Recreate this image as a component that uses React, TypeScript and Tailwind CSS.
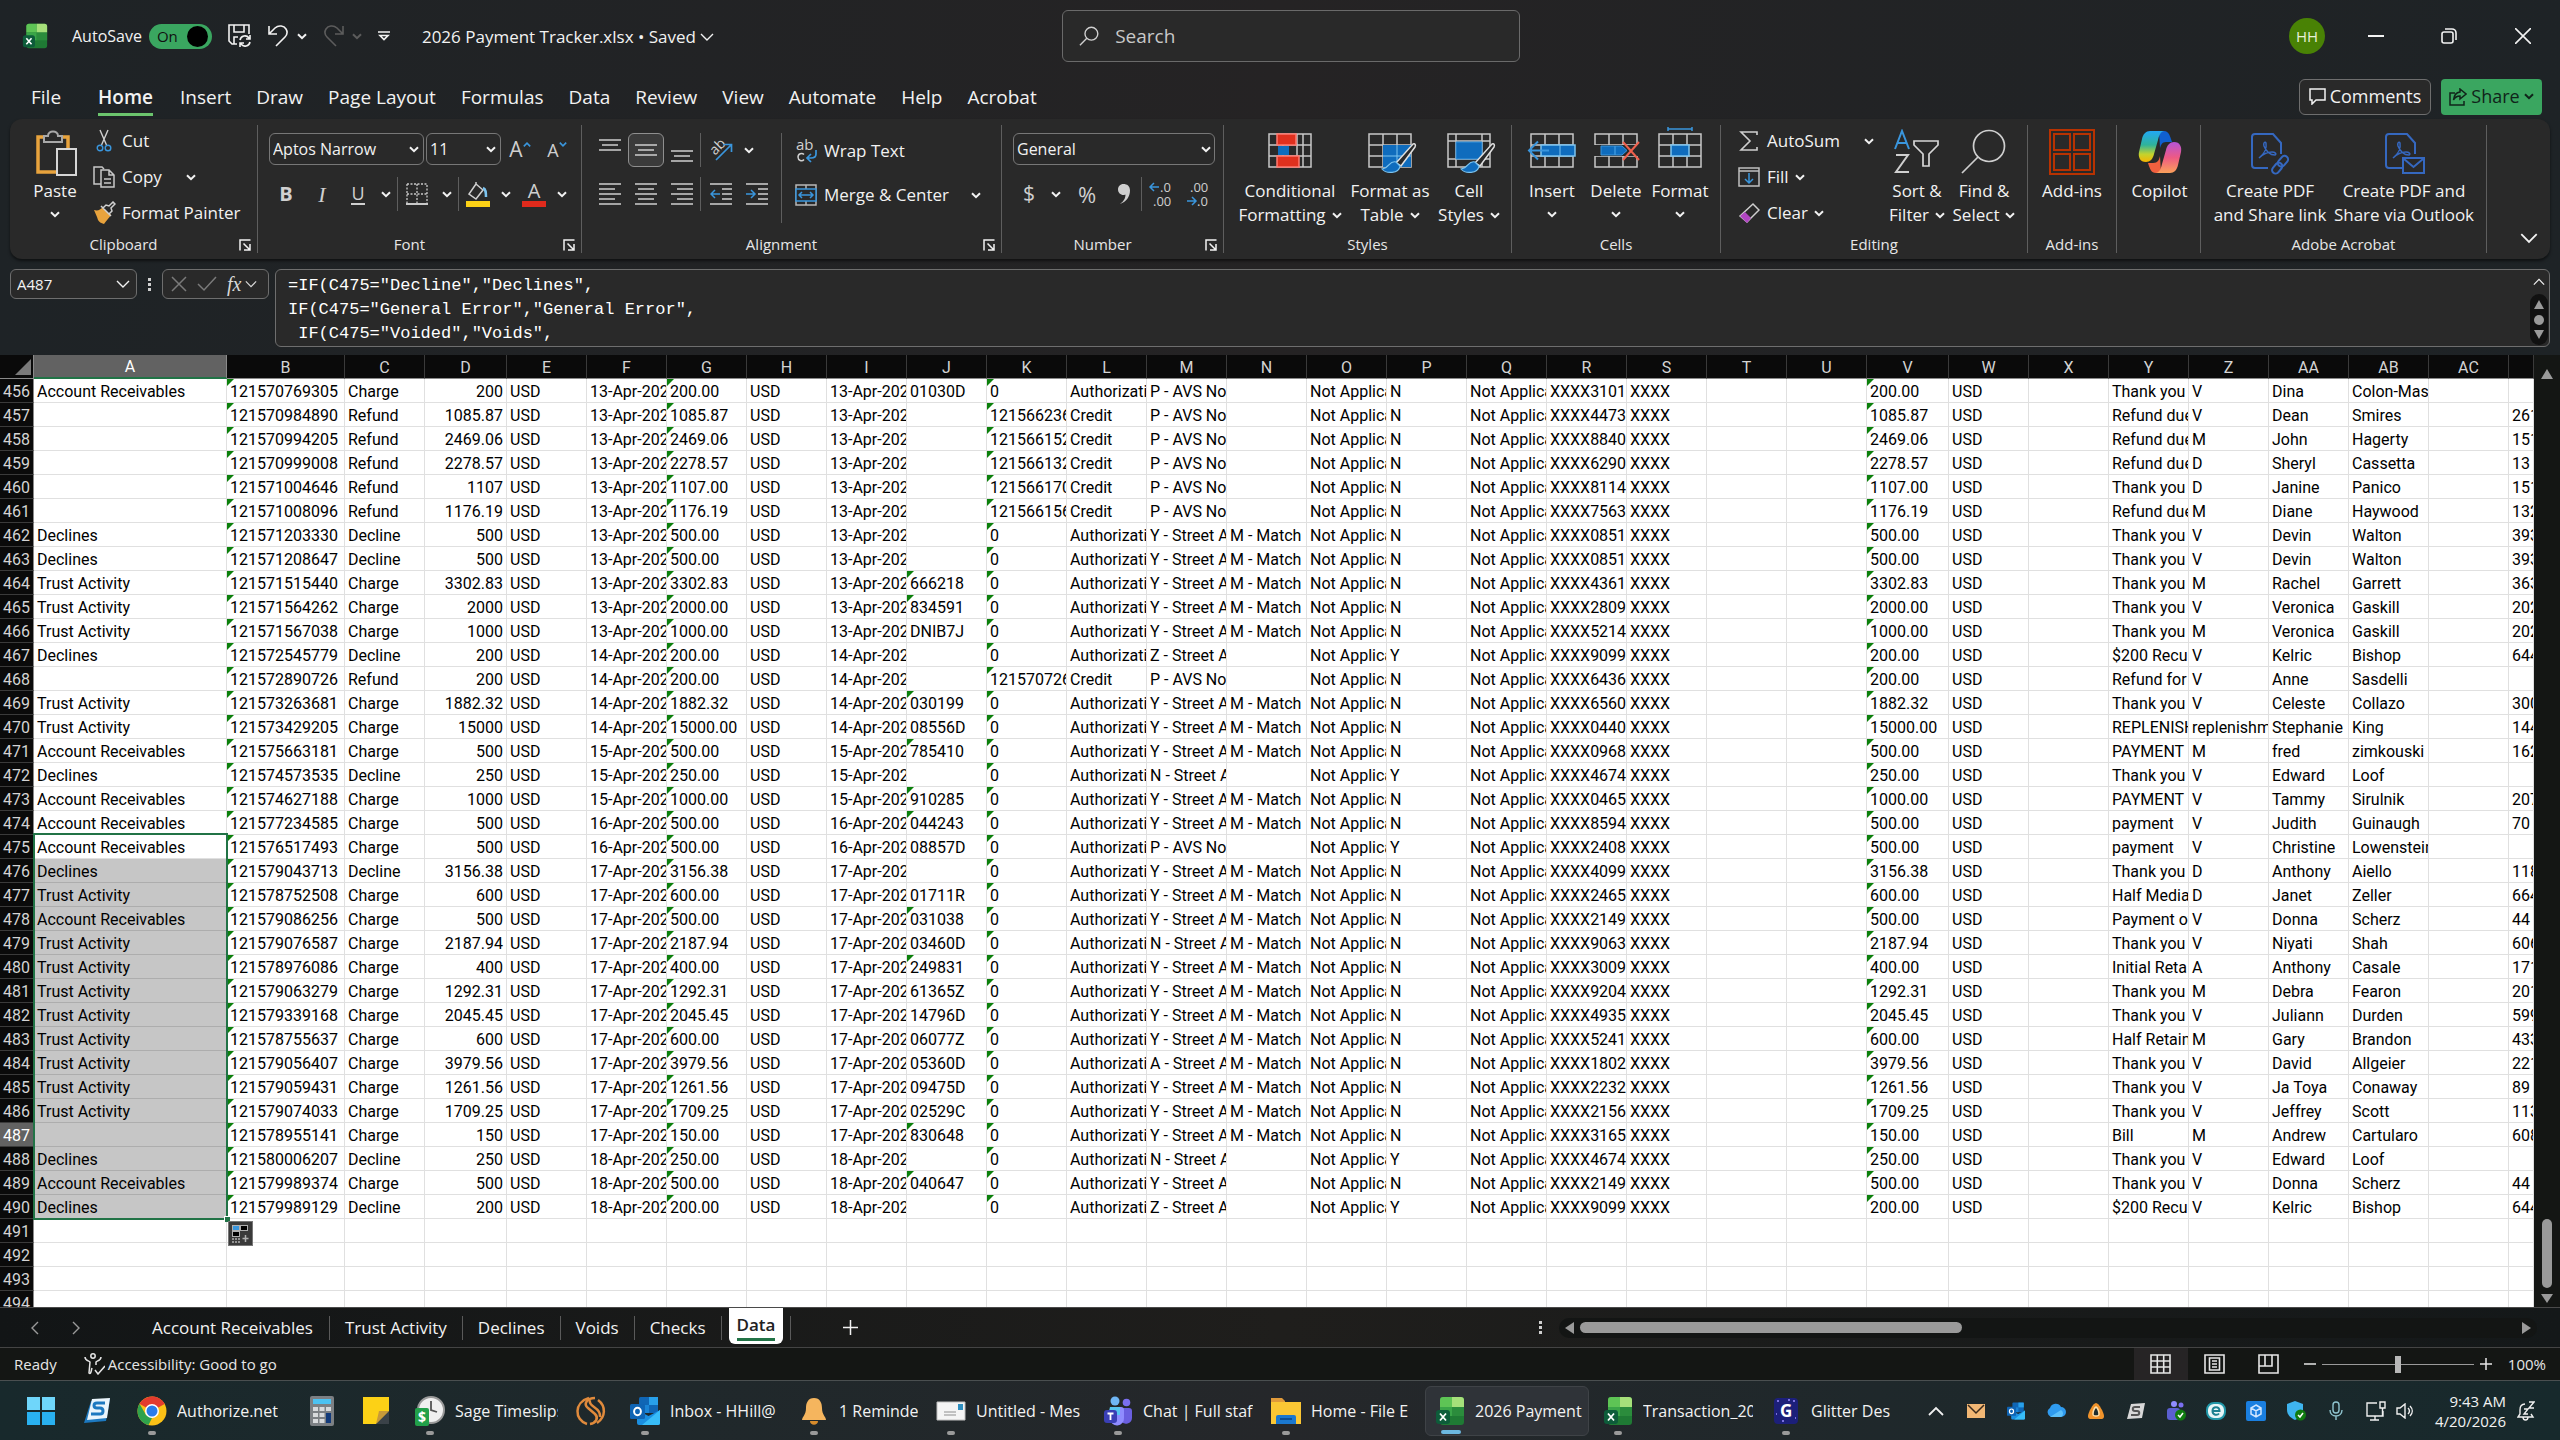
import { useState, type ReactNode } from "react";
import clsx from "clsx";

type Row = [
    account: string,
    id: string,
    type: string,
    amount: number,
    day: number,
    auth: string,
    ref: string,
    avs: string,
    cvv: string,
    dup: string,
    card: string,
    note: string,
    brand: string,
    first: string,
    last: string,
    address: string,
];

const FIRST_ROW = 456;
const AR = "Account Receivables";
const TA = "Trust Activity";
const DE = "Declines";
const TY = "Thank you f";
const RD = "Refund due";
const YS = "Y - Street A";
const PA = "P - AVS No";
const MM = "M - Match";

// long values are kept at the length their column can show
const ROWS: Row[] = [
    [AR, "121570769305", "Charge", 200, 13, "01030D", "0", PA, "", "N", "3101", TY, "V", "Dina", "Colon-Mas", ""],
    ["", "121570984890", "Refund", 1085.87, 13, "", "121566236", PA, "", "N", "4473", RD, "V", "Dean", "Smires", "261"],
    ["", "121570994205", "Refund", 2469.06, 13, "", "121566152", PA, "", "N", "8840", RD, "M", "John", "Hagerty", "151"],
    ["", "121570999008", "Refund", 2278.57, 13, "", "121566132", PA, "", "N", "6290", RD, "D", "Sheryl", "Cassetta", "13 T"],
    ["", "121571004646", "Refund", 1107, 13, "", "121566170", PA, "", "N", "8114", TY, "D", "Janine", "Panico", "151"],
    ["", "121571008096", "Refund", 1176.19, 13, "", "121566156", PA, "", "N", "7563", RD, "M", "Diane", "Haywood", "132"],
    [DE, "121571203330", "Decline", 500, 13, "", "0", YS, MM, "N", "0851", TY, "V", "Devin", "Walton", "393"],
    [DE, "121571208647", "Decline", 500, 13, "", "0", YS, MM, "N", "0851", TY, "V", "Devin", "Walton", "393"],
    [TA, "121571515440", "Charge", 3302.83, 13, "666218", "0", YS, MM, "N", "4361", TY, "M", "Rachel", "Garrett", "363"],
    [TA, "121571564262", "Charge", 2000, 13, "834591", "0", YS, MM, "N", "2809", TY, "V", "Veronica", "Gaskill", "202"],
    [TA, "121571567038", "Charge", 1000, 13, "DNIB7J", "0", YS, MM, "N", "5214", TY, "M", "Veronica", "Gaskill", "202"],
    [DE, "121572545779", "Decline", 200, 14, "", "0", "Z - Street A", "", "Y", "9099", "$200 Recu", "V", "Kelric", "Bishop", "644"],
    ["", "121572890726", "Refund", 200, 14, "", "121570726", PA, "", "N", "6436", "Refund for", "V", "Anne", "Sasdelli", ""],
    [TA, "121573263681", "Charge", 1882.32, 14, "030199", "0", YS, MM, "N", "6560", TY, "V", "Celeste", "Collazo", "300"],
    [TA, "121573429205", "Charge", 15000, 14, "08556D", "0", YS, MM, "N", "0440", "REPLENISH", "replenishm", "Stephanie", "King", "144"],
    [AR, "121575663181", "Charge", 500, 15, "785410", "0", YS, MM, "N", "0968", "PAYMENT", "M", "fred", "zimkouski", "162"],
    [DE, "121574573535", "Decline", 250, 15, "", "0", "N - Street A", "", "Y", "4674", TY, "V", "Edward", "Loof", ""],
    [AR, "121574627188", "Charge", 1000, 15, "910285", "0", YS, MM, "N", "0465", "PAYMENT", "V", "Tammy", "Sirulnik", "207"],
    [AR, "121577234585", "Charge", 500, 16, "044243", "0", YS, MM, "N", "8594", "payment", "V", "Judith", "Guinaugh", "70 J"],
    [AR, "121576517493", "Charge", 500, 16, "08857D", "0", PA, "", "Y", "2408", "payment", "V", "Christine", "Lowenstein", ""],
    [DE, "121579043713", "Decline", 3156.38, 17, "", "0", YS, MM, "N", "4099", TY, "D", "Anthony", "Aiello", "118"],
    [TA, "121578752508", "Charge", 600, 17, "01711R", "0", YS, MM, "N", "2465", "Half Media", "D", "Janet", "Zeller", "664"],
    [AR, "121579086256", "Charge", 500, 17, "031038", "0", YS, MM, "N", "2149", "Payment of", "V", "Donna", "Scherz", "44"],
    [TA, "121579076587", "Charge", 2187.94, 17, "03460D", "0", "N - Street A", MM, "N", "9063", TY, "V", "Niyati", "Shah", "606"],
    [TA, "121578976086", "Charge", 400, 17, "249831", "0", YS, MM, "N", "3009", "Initial Reta", "A", "Anthony", "Casale", "171"],
    [TA, "121579063279", "Charge", 1292.31, 17, "61365Z", "0", YS, MM, "N", "9204", TY, "M", "Debra", "Fearon", "201"],
    [TA, "121579339168", "Charge", 2045.45, 17, "14796D", "0", YS, MM, "N", "4935", TY, "V", "Juliann", "Durden", "599"],
    [TA, "121578755637", "Charge", 600, 17, "06077Z", "0", YS, MM, "N", "5241", "Half Retain", "M", "Gary", "Brandon", "433"],
    [TA, "121579056407", "Charge", 3979.56, 17, "05360D", "0", "A - Street A", MM, "N", "1802", TY, "V", "David", "Allgeier", "221"],
    [TA, "121579059431", "Charge", 1261.56, 17, "09475D", "0", YS, MM, "N", "2232", TY, "V", "Ja Toya", "Conaway", "89"],
    [TA, "121579074033", "Charge", 1709.25, 17, "02529C", "0", YS, MM, "N", "2156", TY, "V", "Jeffrey", "Scott", "113"],
    ["", "121578955141", "Charge", 150, 17, "830648", "0", YS, MM, "N", "3165", "Bill", "M", "Andrew", "Cartularo", "608"],
    [DE, "121580006207", "Decline", 250, 18, "", "0", "N - Street A", "", "Y", "4674", TY, "V", "Edward", "Loof", ""],
    [AR, "121579989374", "Charge", 500, 18, "040647", "0", YS, "", "N", "2149", TY, "V", "Donna", "Scherz", "44"],
    [DE, "121579989129", "Decline", 200, 18, "", "0", "Z - Street A", "", "Y", "9099", "$200 Recu", "V", "Kelric", "Bishop", "644"],
];

const COLUMNS = "A B C D E F G H I J K L M N O P Q R S T U V W X Y Z AA AB AC".split(" ");

// one string per column, A to AD
function toCells(r: Row): string[] {
    const [account, id, type, amount, day, auth, ref, avs, cvv, dup, card, note, brand, first, last, address] = r;
    const date = `${day}-Apr-202`;
    const fixed = amount.toFixed(2);
    return [
        account, id, type, String(amount), "USD", date, fixed, "USD", date, auth, ref,
        type === "Refund" ? "Credit" : "Authorizati",
        avs, cvv, "Not Applica", dup, "Not Applica", `XXXX${card}`, "XXXX", "", "",
        fixed, "USD", "", note, brand, first, last, "", address,
    ];
}

// "number stored as text" flag
const isFlagged = (col: string, value: string) =>
    ["B", "G", "K", "V"].includes(col) || (col === "J" && /^\d+$/.test(value));

/* ---------- small icons ---------- */

function Chevron({ className = "" }: { className?: string }) {
    return (
        <svg width="10" height="7" viewBox="0 0 10 7" className={clsx("shrink-0", className)} fill="none" stroke="currentColor" strokeWidth="2">
            <path d="M1 1.200l4 4 4-4" />
        </svg>
    );
}

function ThinChevron({ size = 14, className = "" }: { size?: number; className?: string }) {
    return (
        <svg width={size} height={size} viewBox="0 0 14 14" className={clsx("shrink-0", className)} fill="none" stroke="currentColor" strokeWidth="1.400">
            <path d="M1 4l6 6 6-6" />
        </svg>
    );
}

function Lines({ rows, width = 22, height = 22 }: { rows: [number, number, number][]; width?: number; height?: number }) {
    return (
        <svg width={width} height={height} viewBox={`0 0 ${width} ${height}`} stroke="#cfcfcf" strokeWidth="1.500">
            {rows.map(([x, y, w]) => (
                <path key={y} d={`M${x} ${y}h${w}`} />
            ))}
        </svg>
    );
}

function Launcher() {
    return (
        <button aria-label="Dialog launcher" className="mr-1 flex size-4 items-center justify-center">
            <svg width="12" height="12" viewBox="0 0 12 12" fill="none" stroke="#f2f2f2" strokeWidth="1.500">
                <path d="M1 11.500V1h10.500M4.500 4.500l6 6M11 5v6H5" />
            </svg>
        </button>
    );
}

function ExcelIcon({ size = 30 }: { size?: number }) {
    return (
        <svg width={size} height={size} viewBox="0 0 30 30">
            <rect x="5" y="1" width="24" height="28" rx="3" fill="#1f7a34" />
            <path d="M5 4a3 3 0 0 1 3-3h9v10H5z" fill="#5ec455" />
            <path d="M17 1h9a3 3 0 0 1 3 3v7H17z" fill="#a6e07a" />
            <path d="M5 11h12v9H5z" fill="#3aa548" />
            <path d="M17 11h12v9H17z" fill="#2b8c3c" />
            <rect x="1" y="14" width="14" height="14" rx="3" fill="#0d5c3a" />
            <path d="M5 17.500l6 7M11 17.500l-6 7" stroke="#fff" strokeWidth="1.800" />
        </svg>
    );
}

function OutlookIcon({ size = 30 }: { size?: number }) {
    return (
        <svg width={size} height={size} viewBox="0 0 30 30">
            <rect x="9" y="1" width="19" height="16" rx="1.500" fill="#1066b5" />
            <path d="M9 9h10v8H9z" fill="#1a84d6" />
            <path d="M19 1h9v8h-9z" fill="#28a0ea" />
            <path d="M7 14l11.500 6L30 14v13a2 2 0 0 1-2 2H9a2 2 0 0 1-2-2z" fill="#1b8fe0" />
            <path d="M30 14v13a2 2 0 0 1-2 2H12z" fill="#38bdf8" />
            <rect x="0" y="8" width="15" height="15" rx="1.500" fill="#0f64b4" />
            <ellipse cx="7.500" cy="15.500" rx="3.400" ry="3.800" fill="none" stroke="#fff" strokeWidth="2" />
        </svg>
    );
}

function TeamsIcon({ size = 30 }: { size?: number }) {
    return (
        <svg width={size} height={size} viewBox="0 0 30 30">
            <circle cx="12" cy="5" r="4.500" fill="#6fb6f5" />
            <circle cx="23.500" cy="6.500" r="3.800" fill="#7b6ff0" />
            <path d="M18 12h8a3 3 0 0 1 3 3v7a6 6 0 0 1-11 3z" fill="#6a5fe0" />
            <path d="M7 11h11a3 3 0 0 1 3 3v8a7 7 0 0 1-14 1z" fill="#8f8cff" />
            <path d="M7 11h10v8H5z" fill="#56c4f0" />
            <rect x="1" y="14" width="13" height="13" rx="3" fill="#3a3fb5" />
            <path d="M4.500 17.500h6M7.500 17.500v6.500" stroke="#fff" strokeWidth="1.800" />
        </svg>
    );
}

/* ---------- ribbon ---------- */

function Group({ label, width, launcher, children }: { label?: string; width: string; launcher?: boolean; children: ReactNode }) {
    return (
        <section className={clsx("flex shrink-0", width)} aria-label={label}>
            <div className="flex min-w-0 flex-1 flex-col pt-1">
                <div className="flex h-[108px]">{children}</div>
                <div className="flex h-[27px] items-center text-[15px] text-[#e6e6e6]">
                    <span className="flex-1 text-center">{label}</span>
                    {launcher && <Launcher />}
                </div>
            </div>
            <div className="my-1.5 w-px bg-[#5e5e5e]" />
        </section>
    );
}

function BigButton({ width, icon, lines, menu }: { width: string; icon: ReactNode; lines: string[]; menu?: "inline" | "below" }) {
    return (
        <button className={clsx("flex shrink-0 flex-col items-center whitespace-nowrap pt-1.5 text-[17px] leading-6", width)}>
            <span className="flex h-[50px] items-start justify-center">{icon}</span>
            {lines.map((line, i) => (
                <span key={line} className="flex items-center gap-1.5">
                    {line}
                    {menu === "inline" && i === lines.length - 1 && <Chevron />}
                </span>
            ))}
            {menu === "below" && <Chevron className="mt-2" />}
        </button>
    );
}

function SmallButton({ icon, label, menu }: { icon: ReactNode; label: string; menu?: boolean }) {
    return (
        <button className="flex h-9 items-center gap-1.5 whitespace-nowrap text-[17px]">
            <span className="flex w-6 justify-center">{icon}</span>
            <span>{label}</span>
            {menu && <Chevron />}
        </button>
    );
}

function Tool({ width = "w-9", label, active, children }: { width?: string; label: string; active?: boolean; children: ReactNode }) {
    return (
        <button
            aria-label={label}
            className={clsx(
                "flex h-[34px] shrink-0 items-center justify-center",
                width,
                active && "rounded-md border border-[#8f8f8f] bg-[#3b3b3b]",
            )}
        >
            {children}
        </button>
    );
}

const Rule = () => <div className="h-[34px] w-px shrink-0 bg-[#5e5e5e]" />;

function Brush() {
    return (
        <g>
            <path d="M48 15c2-1 3 1 2 3L36 37l-5-3z" fill="#292929" stroke="#e0e0e0" strokeWidth="1.500" />
            <path d="M31 33c-7-2-6 6-14 7 4 5 17 5 18-3z" fill="#0f6cbd" stroke="#7cc4f0" strokeWidth="1.200" />
        </g>
    );
}

function CellGrid({ children }: { children?: ReactNode }) {
    return (
        <svg width="50" height="46" viewBox="0 0 50 46" fill="none" className="overflow-visible">
            <path d="M4 5h42v33H4zM4 16h42M4 27h42M18 5v33M32 5v33" stroke="#c8c8c8" strokeWidth="1.500" />
            {children}
        </svg>
    );
}

function PdfIcon({ children }: { children: ReactNode }) {
    return (
        <svg width="42" height="46" viewBox="0 0 42 46" fill="none" stroke="#3568c0" strokeWidth="2">
            <path d="M19 39H6a3 3 0 0 1-3-3V8a3 3 0 0 1 3-3h18l8 9v11" />
            <path d="M10 29c5-4 8-10 7-15-1-2-3 0-2 3 2 5 6 9 11 9 2-1 0-3-3-3-5 0-9 2-13 6z" strokeWidth="1.500" />
            {children}
        </svg>
    );
}

function Ribbon() {
    return (
        <div className="mx-2.5 flex h-[140px] rounded-xl bg-[#292929] text-[#f2f2f2] shadow-[0_2px_3px_#0008]">
            <Group label="Clipboard" width="w-[248px]" launcher>
                <BigButton
                    width="ml-[18px] w-[54px]"
                    menu="below"
                    lines={["Paste"]}
                    icon={
                        <svg width="46" height="48" viewBox="0 0 46 48" fill="none">
                            <path d="M6 8h30v35H6z" stroke="#e8a33d" strokeWidth="3.500" />
                            <path d="M12 13V7h4c0-6 10-6 10 0h4v6z" fill="#292929" stroke="#a8a8a8" strokeWidth="2" />
                            <path d="M25 20h19v26H25z" fill="#292929" stroke="#d6d6d6" strokeWidth="2" />
                        </svg>
                    }
                />
                <div className="ml-2.5 flex flex-col">
                    <SmallButton
                        label="Cut"
                        icon={
                            <svg width="16" height="24" viewBox="0 0 16 24" fill="none" strokeWidth="1.400">
                                <path d="M4 1l6.500 15M12 1L5.500 16" stroke="#d0d0d0" />
                                <circle cx="4" cy="19" r="2.800" stroke="#3a96dd" />
                                <circle cx="12" cy="19" r="2.800" stroke="#3a96dd" />
                            </svg>
                        }
                    />
                    <div className="flex items-center">
                        <SmallButton
                            label="Copy"
                            icon={
                                <svg width="24" height="24" viewBox="0 0 24 24" fill="none" stroke="#c8c8c8" strokeWidth="1.500">
                                    <path d="M9 19H2V2h8l2 2" />
                                    <path d="M9 5h8l5 5v12H9zM17 5v5h5M12 14h7M12 18h7" />
                                </svg>
                            }
                        />
                        <Chevron className="ml-6" />
                    </div>
                    <SmallButton
                        label="Format Painter"
                        icon={
                            <svg width="24" height="24" viewBox="0 0 24 24" fill="none">
                                <path d="M2 9c4 1 6 0 9-3l8 8c-2 3-5 6-7 9-3-1-5-2-6-4l-1-3z" fill="#e8a33d" />
                                <path d="M9 5l10 10M11 7l3-3 3 1 4-4 2 2-4 4 1 3-3 3z" fill="#292929" stroke="#d0d0d0" strokeWidth="1.500" />
                            </svg>
                        }
                    />
                </div>
            </Group>

            <Group label="Font" width="w-[324px]" launcher>
                <div className="flex flex-col gap-2.5 pt-2.5 pl-[11px]">
                    <div className="flex h-[34px]">
                        <label className="flex h-8 w-[155px] items-center rounded-md border border-[#777] pr-1 pl-[3px]">
                            <input aria-label="Font name" defaultValue="Aptos Narrow" className="w-full min-w-0 bg-transparent text-[16px] outline-none" />
                            <Chevron />
                        </label>
                        <label className="ml-0.5 flex h-8 w-[75px] items-center rounded-md border border-[#777] pr-1 pl-[3px]">
                            <input aria-label="Font size" defaultValue="11" className="w-full min-w-0 bg-transparent text-[16px] outline-none" />
                            <Chevron />
                        </label>
                        <Tool label="Increase font size" width="w-[38px]">
                            <span className="text-[21px] text-[#cfcfcf]">A</span>
                            <span className="mb-3 text-[#3a96dd]"><Chevron className="w-2 rotate-180" /></span>
                        </Tool>
                        <Tool label="Decrease font size">
                            <span className="text-[18px] text-[#cfcfcf]">A</span>
                            <span className="mb-3 text-[#3a96dd]"><Chevron className="w-2" /></span>
                        </Tool>
                    </div>
                    <div className="flex h-[34px]">
                        <Tool label="Bold" width="w-[34px]"><b className="text-[20px] text-[#d0d0d0]">B</b></Tool>
                        <Tool label="Italic" width="w-[38px]"><i className="font-['Liberation_Serif',serif] text-[22px] text-[#d0d0d0]">I</i></Tool>
                        <Tool label="Underline" width="w-[34px]"><span className="border-b-2 border-[#d0d0d0] text-[18px] leading-5 text-[#d0d0d0]">U</span></Tool>
                        <Tool label="Underline options" width="w-[22px]"><Chevron /></Tool>
                        <Rule />
                        <Tool label="Borders" width="w-[38px]">
                            <svg width="22" height="22" viewBox="0 0 22 22" stroke="#c8c8c8" fill="none">
                                <path d="M1 1h20v19M1 1v19M11 1v19M1 11h20" strokeWidth="1.300" strokeDasharray="2 1.500" />
                                <path d="M0 21h22" strokeWidth="2" />
                            </svg>
                        </Tool>
                        <Tool label="Border options" width="w-[22px]"><Chevron /></Tool>
                        <Rule />
                        <Tool label="Fill colour" width="w-[38px]">
                            <svg width="24" height="26" viewBox="0 0 24 26" fill="none">
                                <path d="M10 3l-7 10 7 5 7-9-7-6V1" stroke="#d0d0d0" strokeWidth="1.500" />
                                <path d="M17 7c3 1 3 5 3 9" stroke="#7cc4f0" strokeWidth="2.500" />
                                <path d="M0 20h24v6H0z" fill="#fcd116" />
                            </svg>
                        </Tool>
                        <Tool label="Fill options" width="w-[18px]"><Chevron /></Tool>
                        <Tool label="Font colour" width="w-[38px]">
                            <span className="border-b-[6px] border-[#e02a1c] px-1.5 text-[20px] leading-5 text-[#d0d0d0]">A</span>
                        </Tool>
                        <Tool label="Font colour options" width="w-[18px]"><Chevron /></Tool>
                    </div>
                </div>
            </Group>

            <Group label="Alignment" width="w-[420px]" launcher>
                <div className="flex flex-col gap-2.5 pt-2.5 pl-2.5">
                    <div className="flex h-[34px]">
                        <Tool label="Top align"><Lines rows={[[0, 5, 22], [3, 10, 16], [0, 15, 22]]} height={30} /></Tool>
                        <Tool label="Middle align" active><Lines rows={[[0, 6, 22], [3, 11, 16], [0, 16, 22]]} /></Tool>
                        <Tool label="Bottom align"><Lines rows={[[0, 16, 22], [3, 21, 16], [0, 26, 22]]} height={30} /></Tool>
                        <Rule />
                        <Tool label="Orientation" width="w-10">
                            <svg width="24" height="24" viewBox="0 0 24 24" fill="none" className="overflow-visible">
                                <text x="1" y="14" fontSize="14" fill="#d0d0d0" transform="rotate(-45 8 10)">ab</text>
                                <path d="M7 22L22 7M15 6.500h7.500V14" stroke="#3a96dd" strokeWidth="1.700" />
                            </svg>
                        </Tool>
                        <Tool label="Orientation options" width="w-4"><Chevron /></Tool>
                    </div>
                    <div className="flex h-[34px]">
                        <Tool label="Align left"><Lines rows={[[0, 1, 22], [0, 6, 16], [0, 11, 22], [0, 16, 16], [0, 21, 22]]} /></Tool>
                        <Tool label="Centre"><Lines rows={[[0, 1, 22], [3, 6, 16], [0, 11, 22], [3, 16, 16], [0, 21, 22]]} /></Tool>
                        <Tool label="Align right"><Lines rows={[[0, 1, 22], [6, 6, 16], [0, 11, 22], [6, 16, 16], [0, 21, 22]]} /></Tool>
                        <Rule />
                        <Tool label="Decrease indent" width="w-10">
                            <svg width="22" height="22" viewBox="0 0 22 22" fill="none" strokeWidth="1.500">
                                <path d="M0 1h22M12 6h10M12 11h10M12 16h10M0 21h22" stroke="#cfcfcf" />
                                <path d="M10 11H1M5 7l-4 4 4 4" stroke="#3a96dd" />
                            </svg>
                        </Tool>
                        <Tool label="Increase indent" width="w-8">
                            <svg width="22" height="22" viewBox="0 0 22 22" fill="none" strokeWidth="1.500">
                                <path d="M0 1h22M12 6h10M12 11h10M12 16h10M0 21h22" stroke="#cfcfcf" />
                                <path d="M0 11h9M5 7l4 4-4 4" stroke="#3a96dd" />
                            </svg>
                        </Tool>
                    </div>
                </div>
                <div className="mt-2.5 ml-2 h-[90px] w-px bg-[#5e5e5e]" />
                <div className="ml-3 flex flex-col gap-2 pt-2.5">
                    <SmallButton
                        label="Wrap Text"
                        icon={
                            <svg width="24" height="26" viewBox="0 0 24 26" fill="none">
                                <text x="2" y="12" fontSize="15" fill="#d0d0d0">ab</text>
                                <path d="M10 16.500c-2-2-6-1-6 2.500s4 5 6 2.500" stroke="#d0d0d0" strokeWidth="1.500" />
                                <path d="M22 12v4q0 4-5 4h-3M17 16l-4 4 4 4" stroke="#3a96dd" strokeWidth="1.700" />
                            </svg>
                        }
                    />
                    <div className="flex items-center">
                        <SmallButton
                            label="Merge & Center"
                            icon={
                                <svg width="22" height="22" viewBox="0 0 22 22" fill="none">
                                    <path d="M1 1h20v20H1zM11 1v20" stroke="#b8b8b8" strokeWidth="1.500" />
                                    <path d="M1 5h20v12H1z" fill="#292929" stroke="#3a96dd" strokeWidth="1.500" />
                                    <path d="M4 11h14M7 8l-3 3 3 3M15 8l3 3-3 3" stroke="#3a96dd" strokeWidth="1.500" />
                                </svg>
                            }
                        />
                        <Chevron className="ml-[22px]" />
                    </div>
                </div>
            </Group>

            <Group label="Number" width="w-[222px]" launcher>
                <div className="flex flex-col gap-2.5 pt-2.5 pl-[11px]">
                    <div className="flex h-[34px]">
                        <label className="relative flex h-8 w-[202px] items-center">
                            <select aria-label="Number format" className="h-8 w-full appearance-none rounded-md border border-[#777] bg-transparent pl-[3px] text-[16px]">
                                <option>General</option>
                            </select>
                            <Chevron className="pointer-events-none absolute right-1" />
                        </label>
                    </div>
                    <div className="flex h-[34px]">
                        <Tool label="Accounting format" width="w-8"><span className="text-[21px] text-[#cfcfcf]">$</span></Tool>
                        <Tool label="Currency options" width="w-[22px]"><Chevron /></Tool>
                        <Tool label="Percent" width="w-10"><span className="text-[22px] text-[#cfcfcf]">%</span></Tool>
                        <Tool label="Comma style" width="w-[34px]">
                            <svg width="14" height="24" viewBox="0 0 14 24" fill="#cfcfcf">
                                <path d="M6.500 2C3 2 1 4.500 1 7.500S3.500 13 6.500 13c1 0 1.500 0 2-.4C8.500 17 6 20 3 22c6-2 10-7 10-13.500C13 4 10 2 6.500 2z" />
                            </svg>
                        </Tool>
                        <Rule />
                        <Tool label="Increase decimal" width="w-10">
                            <svg width="24" height="28" viewBox="0 0 24 28" fill="none" className="overflow-visible">
                                <text x="10" y="12" fontSize="13" fill="#cfcfcf">.0</text>
                                <text x="3" y="26" fontSize="13" fill="#cfcfcf">.00</text>
                                <path d="M9 7H0M4 3L0 7l4 4" stroke="#3a96dd" strokeWidth="1.500" />
                            </svg>
                        </Tool>
                        <Tool label="Decrease decimal" width="w-[34px]">
                            <svg width="24" height="28" viewBox="0 0 24 28" fill="none" className="overflow-visible">
                                <text x="3" y="12" fontSize="13" fill="#cfcfcf">.00</text>
                                <text x="10" y="26" fontSize="13" fill="#cfcfcf">.0</text>
                                <path d="M0 21h9M5 17l4 4-4 4" stroke="#3a96dd" strokeWidth="1.500" />
                            </svg>
                        </Tool>
                    </div>
                </div>
            </Group>

            <Group label="Styles" width="w-[288px]">
                <BigButton
                    width="ml-2 w-[116px]"
                    menu="inline"
                    lines={["Conditional", "Formatting"]}
                    icon={
                        <CellGrid>
                            <path d="M12 5h19v11H12zM12 27h22v11H12z" fill="#e0301e" stroke="#ff7a70" strokeWidth="1.500" />
                            <path d="M13 17h11v9H13z" fill="#0f6cbd" />
                            <path d="M38 5v33" stroke="#c8c8c8" strokeWidth="1.500" />
                        </CellGrid>
                    }
                />
                <BigButton
                    width="w-[84px]"
                    menu="inline"
                    lines={["Format as", "Table"]}
                    icon={
                        <CellGrid>
                            <path d="M18 16h28v22H18z" fill="#0f6cbd" />
                            <path d="M18 27h28M32 16v22" stroke="#7cc4f0" />
                            <Brush />
                        </CellGrid>
                    }
                />
                <BigButton
                    width="w-[74px]"
                    menu="inline"
                    lines={["Cell", "Styles"]}
                    icon={
                        <svg width="50" height="46" viewBox="0 0 50 46" fill="none" className="overflow-visible">
                            <path d="M4 5h42v33H4zM4 12h42M12 5v33M38 5v33M4 30h42" stroke="#c8c8c8" strokeWidth="1.500" />
                            <path d="M12 13h26v17H12z" fill="#0f6cbd" stroke="#3a96dd" />
                            <Brush />
                        </svg>
                    }
                />
            </Group>

            <Group label="Cells" width="w-[209px]">
                <BigButton
                    width="ml-2 w-16"
                    menu="below"
                    lines={["Insert"]}
                    icon={
                        <CellGrid>
                            <path d="M14 16h34v11H14z" fill="#0f6cbd" stroke="#7cc4f0" strokeWidth="1.500" />
                            <path d="M33 16v11" stroke="#7cc4f0" />
                            <path d="M22 21.500H2M11 12.500l-9 9 9 9" stroke="#3a96dd" strokeWidth="2" />
                        </CellGrid>
                    }
                />
                <BigButton
                    width="w-16"
                    menu="below"
                    lines={["Delete"]}
                    icon={
                        <CellGrid>
                            <path d="M2 16h46v11H2z" fill="#292929" />
                            <path d="M10 17h14v9H10zM24 17h7l5 4.500-5 4.500h-7z" fill="#0f6cbd" stroke="#3a96dd" />
                            <path d="M32 13l16 18M48 13L32 31" stroke="#f0604d" strokeWidth="2" />
                        </CellGrid>
                    }
                />
                <BigButton
                    width="w-16"
                    menu="below"
                    lines={["Format"]}
                    icon={
                        <CellGrid>
                            <path d="M16 16h18v11H16z" fill="#0f6cbd" stroke="#7cc4f0" strokeWidth="1.500" />
                            <path d="M13 0h24M13-2v4M37-2v4" stroke="#3a96dd" strokeWidth="1.500" />
                        </CellGrid>
                    }
                />
            </Group>

            <Group label="Editing" width="w-[307px]">
                <div className="ml-4 flex w-[150px] flex-col">
                    <div className="flex items-center">
                        <SmallButton
                            label="AutoSum"
                            icon={
                                <svg width="20" height="22" viewBox="0 0 20 22" fill="none" stroke="#cfcfcf" strokeWidth="1.600">
                                    <path d="M18 5V2H2l9 9-9 9h16v-3" />
                                </svg>
                            }
                        />
                        <Chevron className="ml-6" />
                    </div>
                    <SmallButton
                        label="Fill"
                        menu
                        icon={
                            <svg width="22" height="20" viewBox="0 0 22 20" fill="none" strokeWidth="1.500">
                                <path d="M1 1h20v18H1zM1 4h20" stroke="#c0c0c0" />
                                <path d="M11 6v10M7 12l4 4 4-4" stroke="#3a96dd" />
                            </svg>
                        }
                    />
                    <SmallButton
                        label="Clear"
                        menu
                        icon={
                            <svg width="22" height="22" viewBox="0 0 22 22" fill="none" strokeWidth="1.500">
                                <path d="M2 14L15 2l6 6L9 20z" stroke="#cfcfcf" />
                                <path d="M2 14l5-4 6 6-4 5z" fill="#b146c2" />
                            </svg>
                        }
                    />
                </div>
                <BigButton
                    width="w-[60px]"
                    menu="inline"
                    lines={["Sort &", "Filter"]}
                    icon={
                        <svg width="46" height="46" viewBox="0 0 46 46" fill="none" strokeWidth="1.700">
                            <path d="M1 20L8 2l7 18M3.500 14h9" stroke="#3a96dd" strokeWidth="2" />
                            <path d="M2 26h12L2 43h13" stroke="#cfcfcf" strokeWidth="2" />
                            <path d="M20 12h24v4l-9 9v12h-6V25l-9-9z" stroke="#d6d6d6" />
                        </svg>
                    }
                />
                <BigButton
                    width="ml-1 w-[66px]"
                    menu="inline"
                    lines={["Find &", "Select"]}
                    icon={
                        <svg width="46" height="46" viewBox="0 0 46 46" fill="none" stroke="#cfcfcf" strokeWidth="1.700">
                            <circle cx="28" cy="17" r="15.500" />
                            <path d="M17 28L1 44" />
                        </svg>
                    }
                />
            </Group>

            <Group label="Add-ins" width="w-[89px]">
                <BigButton
                    width="w-full"
                    lines={["Add-ins"]}
                    icon={
                        <svg width="46" height="46" viewBox="0 0 46 46" fill="none" stroke="#b83201" strokeWidth="2">
                            <path d="M1 1h44v44H1z" />
                            <path d="M5 5h16v16H5zM25 5h16v16H25zM5 25h16v16H5zM25 25h16v16H25z" />
                        </svg>
                    }
                />
            </Group>

            <Group width="w-[84px]">
                <BigButton
                    width="ml-px w-full"
                    lines={["Copilot"]}
                    icon={
                        <svg width="46" height="46" viewBox="0 0 46 46">
                            <defs>
                                <linearGradient id="cpA" x1="0" y1="0" x2="0" y2="1">
                                    <stop offset="0" stopColor="#22a8f5" />
                                    <stop offset=".45" stopColor="#2fb39a" />
                                    <stop offset=".75" stopColor="#c3d32e" />
                                    <stop offset="1" stopColor="#f7b500" />
                                </linearGradient>
                                <linearGradient id="cpB" x1="0" y1="0" x2="0" y2="1">
                                    <stop offset="0" stopColor="#b455d8" />
                                    <stop offset=".5" stopColor="#ee5a84" />
                                    <stop offset="1" stopColor="#fba15a" />
                                </linearGradient>
                            </defs>
                            <path d="M22 2h5c5 0 6 5 8 11h-6c-4 0-5 3-6 6z" fill="#1060d0" />
                            <path d="M13 2h14c-4 1-5 5-6 9l-4 14c-1 5-4 8-8 8-6 0-8-5-7-10l3-13c1-5 4-8 8-8z" fill="url(#cpA)" />
                            <path d="M24 44h-5c-5 0-6-4-8-10h5c5 0 6-3 7-7z" fill="#f0603f" />
                            <path d="M33 44H19c4-1 5-5 6-9l4-14c1-5 4-8 8-8 6 0 8 5 7 10l-3 13c-1 5-4 8-8 8z" fill="url(#cpB)" />
                        </svg>
                    }
                />
            </Group>

            <Group label="Adobe Acrobat" width="w-[286px]">
                <BigButton
                    width="ml-2.5 w-[118px]"
                    lines={["Create PDF", "and Share link"]}
                    icon={
                        <PdfIcon>
                            <g transform="rotate(-50 31 35)">
                                <rect x="20" y="32" width="12" height="7" rx="3.500" fill="#292929" />
                                <rect x="29" y="32" width="12" height="7" rx="3.500" />
                            </g>
                        </PdfIcon>
                    }
                />
                <BigButton
                    width="w-[150px]"
                    lines={["Create PDF and", "Share via Outlook"]}
                    icon={
                        <PdfIcon>
                            <path d="M20 29h21v15H20zM21 30l9.500 8 9.500-8" fill="#292929" />
                        </PdfIcon>
                    }
                />
            </Group>

            <div className="flex flex-1 items-end justify-end pr-3 pb-3">
                <button aria-label="Collapse the ribbon"><ThinChevron size={18} /></button>
            </div>
        </div>
    );
}

/* ---------- window chrome ---------- */

function TitleBar() {
    const [autoSave, setAutoSave] = useState(true);
    return (
        <header className="flex h-[72px] items-center pl-[22px]">
            <div className="flex flex-1 items-center">
                <ExcelIcon size={26} />
                <label className="ml-6 flex items-center gap-[7px] text-[16px]">
                    AutoSave
                    <input type="checkbox" className="sr-only" checked={autoSave} onChange={(e) => setAutoSave(e.target.checked)} />
                    <span className="flex h-[25px] w-[63px] items-center justify-between rounded-full bg-[#3aa660] pr-1 pl-2 text-[15px] text-[#111]">
                        On
                        <span className="size-[21px] rounded-full bg-black" />
                    </span>
                </label>
                <button aria-label="Save" className="ml-4">
                    <svg width="24" height="24" viewBox="0 0 24 24" fill="none" stroke="currentColor" strokeWidth="1.600">
                        <path d="M9 20H4l-3-3V1h20v9M6 1v7h10V1M6 20v-7h4" />
                        <path d="M12 16a5 5 0 0 1 9-2l1 1M22 11v4h-4M22 18a5 5 0 0 1-9 2l-1-1M12 23v-4h4" />
                    </svg>
                </button>
                <button aria-label="Undo" className="ml-4 flex items-center gap-2">
                    <svg width="21" height="22" viewBox="0 0 21 22" fill="none" stroke="currentColor" strokeWidth="1.600">
                        <path d="M1 1v8h8M1 9l6-6c4-3.500 9-2 11 1 2 3.500 1 6-1 8l-9 9" />
                    </svg>
                    <Chevron />
                </button>
                <button aria-label="Redo" className="ml-4 flex items-center gap-2 text-[#5c5c5c]">
                    <svg width="21" height="22" viewBox="0 0 21 22" fill="none" stroke="currentColor" strokeWidth="1.600">
                        <path d="M20 1v8h-8M20 9l-6-6C10-.500 5 1 3 4c-2 3.500-1 6 1 8l9 9" />
                    </svg>
                    <Chevron />
                </button>
                <button aria-label="Customise toolbar" className="ml-4">
                    <svg width="12" height="10" viewBox="0 0 12 10" fill="none" stroke="currentColor" strokeWidth="1.600">
                        <path d="M0 1h12M2 4.500h8l-4 4z" />
                    </svg>
                </button>
                <button className="ml-8 flex items-center gap-1 pt-0.5 text-[17px]">
                    2026 Payment Tracker.xlsx • Saved
                    <ThinChevron />
                </button>
            </div>
            <label className="flex h-[52px] w-[458px] items-center gap-4 rounded-md border border-[#6a6a6a] bg-[#292929] pl-4">
                <svg width="22" height="22" viewBox="0 0 22 22" fill="none" stroke="#d0d0d0" strokeWidth="1.500">
                    <circle cx="13.500" cy="8.500" r="7" />
                    <path d="M8.500 13.500L1 21" />
                </svg>
                <input type="search" placeholder="Search" className="w-full bg-transparent text-[19px] outline-none placeholder:text-[#c8c8c8]" />
            </label>
            <div className="flex flex-1 items-center justify-end">
                <button className="mr-3.5 size-9 rounded-full bg-[#498205] text-[15px] text-[#e8f0d8]">HH</button>
                <button aria-label="Minimise" className="flex w-[73px] justify-center"><svg width="16" height="2"><path d="M0 1h16" stroke="currentColor" strokeWidth="2" /></svg></button>
                <button aria-label="Restore" className="flex w-[73px] justify-center">
                    <svg width="16" height="16" viewBox="0 0 16 16" fill="none" stroke="currentColor" strokeWidth="1.600">
                        <rect x="1" y="4" width="11" height="11" rx="2" />
                        <path d="M4 1h7a4 4 0 0 1 4 4v7" />
                    </svg>
                </button>
                <button aria-label="Close" className="mr-[11px] ml-3 flex w-[52px] justify-center">
                    <svg width="16" height="16" viewBox="0 0 16 16" stroke="currentColor" strokeWidth="1.600"><path d="M0 0l16 16M16 0L0 16" /></svg>
                </button>
            </div>
        </header>
    );
}

const TABS = ["File", "Home", "Insert", "Draw", "Page Layout", "Formulas", "Data", "Review", "View", "Automate", "Help", "Acrobat"];

function MenuTabs() {
    return (
        <nav className="flex h-[47px] items-center pr-[18px] pl-[31px]">
            <div className="flex gap-[25px] pt-1.5 text-[19px]">
                {TABS.map((tab) => (
                    <button
                        key={tab}
                        className={clsx("border-b-[3px] leading-[31px]", tab === "Home" ? "mr-0.5 ml-3 border-[#6bc46d] font-semibold" : "border-transparent")}
                    >
                        {tab}
                    </button>
                ))}
            </div>
            <div className="ml-auto flex gap-2.5 pt-0.5 text-[18px]">
                <button className="flex h-9 w-[132px] items-center justify-center gap-1 rounded-md border border-[#6e6e6e] bg-[#292929]">
                    <svg width="17" height="17" viewBox="0 0 17 17" fill="none" stroke="currentColor" strokeWidth="1.500"><path d="M1 1h15v11H7l-4 4v-4H1z" /></svg>
                    Comments
                </button>
                <button className="flex h-9 w-[101px] items-center justify-center gap-1 rounded bg-[#3aa660] text-[#10241a]">
                    <svg width="18" height="18" viewBox="0 0 18 18" fill="none" stroke="currentColor" strokeWidth="1.500">
                        <path d="M6 5H1v12h14v-4" />
                        <path d="M11 1l6 5-6 5V8C8 8 6 9 4.500 12 5 7 7 4.500 11 4z" />
                    </svg>
                    Share
                    <Chevron />
                </button>
            </div>
        </nav>
    );
}

function FormulaBar() {
    return (
        <div className="flex items-start px-2.5 pt-2.5 pb-2">
            <label className="flex h-[30px] w-[127px] items-center rounded-md border border-[#6e6e6e] bg-[#292929] px-1.5">
                <input aria-label="Name box" defaultValue="A487" className="w-full min-w-0 bg-transparent text-[15px] outline-none" />
                <ThinChevron />
            </label>
            <svg width="25" height="30" viewBox="0 0 25 30" fill="#cfcfcf"><path d="M11 9h3v3h-3zM11 14h3v3h-3zM11 19h3v3h-3z" /></svg>
            <div className="flex h-[30px] w-[107px] items-center gap-2.5 rounded-md border border-[#6e6e6e] bg-[#292929] pl-2 text-[#7a7a7a]">
                <button aria-label="Cancel"><svg width="16" height="16" viewBox="0 0 16 16" stroke="currentColor" strokeWidth="1.500"><path d="M1 1l14 14M15 1L1 15" /></svg></button>
                <button aria-label="Enter"><svg width="20" height="16" viewBox="0 0 20 16" fill="none" stroke="currentColor" strokeWidth="1.500"><path d="M1 8l6 6L19 1" /></svg></button>
                <button className="flex items-center gap-1 text-[#d8d8d8]">
                    <i className="font-['Liberation_Serif',serif] text-[20px] leading-6">fx</i>
                    <ThinChevron size={12} />
                </button>
            </div>
            <div className="ml-1.5 flex h-[78px] flex-1 rounded-md border border-[#6e6e6e] bg-[#292929]">
                <textarea
                    aria-label="Formula bar"
                    className="h-full flex-1 resize-none overflow-hidden bg-transparent px-3 pt-1 font-['Liberation_Mono',monospace] text-[17px] leading-6 text-white outline-none"
                    defaultValue={'=IF(C475="Decline","Declines",\nIF(C475="General Error","General Error",\n IF(C475="Voided","Voids",'}
                />
                <div className="flex w-5 flex-col items-center pt-1.5">
                    <ThinChevron size={12} className="rotate-180" />
                    <div className="mt-1.5 flex h-[51px] w-[18px] flex-col items-center justify-between rounded-full bg-[#111] py-1.5">
                        <svg width="10" height="9" fill="#9a9a9a"><path d="M5 0l5 9H0z" /></svg>
                        <span className="size-2.5 rounded-full bg-[#9a9a9a]" />
                        <svg width="10" height="9" fill="#9a9a9a"><path d="M0 0h10L5 9z" /></svg>
                    </div>
                </div>
            </div>
        </div>
    );
}

/* ---------- sheet ---------- */

function Cell({ col, rowNo, value }: { col: string; rowNo: number; value: string }) {
    const inSelection = col === "A" && rowNo >= 475 && rowNo <= 490;
    const shaded = inSelection && rowNo !== 475;
    return (
        <td
            className={clsx(
                "relative h-6 border-r border-b p-0",
                shaded ? "border-[#adadad] bg-[#c6c6c6]" : "border-[#e0e0e0]",
                col === "D" && "text-right",
            )}
        >
            <div className="h-[23px] overflow-hidden px-[3px] leading-[25px] whitespace-nowrap">{value}</div>
            {value && isFlagged(col, value) && (
                <span className="absolute top-0 left-0 border-t-[7px] border-r-[7px] border-t-[#0b800b] border-r-transparent" />
            )}
            {col === "A" && rowNo === 475 && (
                <div className="pointer-events-none absolute -top-0.5 -right-0.5 -left-px z-10 h-[387px] border-2 border-[#217346]">
                    <span className="absolute -right-1 -bottom-1 size-1.5 border-t border-l border-white bg-[#217346]" />
                </div>
            )}
            {col === "B" && rowNo === 491 && (
                <button aria-label="Auto fill options" className="absolute top-0.5 left-px z-10 flex size-[25px] items-center justify-center border border-[#777] bg-[#3a3a3a]">
                    <svg width="19" height="19" viewBox="0 0 19 19">
                        <path d="M1 1h16v6H9v6H1z" fill="#b0b0b0" />
                        <path d="M2 2h6v4H2z" fill="#3a96dd" />
                        <path d="M10 2h6v4h-6zM2 8h6v4H2z" fill="#000" />
                        <path d="M1 15h2M4 15h2M7 15h2M1 18h2M4 18h2M7 18h2M14.500 11v7M11.500 14.500h6" stroke="#b0b0b0" strokeWidth="1.500" />
                    </svg>
                </button>
            )}
        </td>
    );
}

function Sheet() {
    const rows = [...ROWS.map(toCells), ...Array.from({ length: 4 }, () => Array<string>(30).fill(""))];
    return (
        <div className="flex min-h-0 flex-1 bg-[#141614]">
            <div className="min-w-0 flex-1 overflow-hidden bg-white">
                <table className="w-full table-fixed border-separate border-spacing-0 font-['Roboto','Liberation_Sans',sans-serif] text-[16px] text-black">
                    <colgroup>
                        <col className="w-[34px]" />
                        {COLUMNS.map((c) => (
                            <col
                                key={c}
                                className={c === "A" ? "w-[193px]" : c === "B" ? "w-[118px]" : c === "D" || c === "V" ? "w-[82px]" : "w-20"}
                            />
                        ))}
                        <col />
                    </colgroup>
                    <thead>
                        <tr className="bg-[#0a0a0a] text-[#d4d4d4]">
                            <th className="h-6 border-r border-b border-[#8a8a8a] p-0">
                                <svg width="16" height="16" className="mr-0.5 ml-auto" fill="#7a7a7a"><path d="M16 0v16H0z" /></svg>
                            </th>
                            {[...COLUMNS, ""].map((c) => (
                                <th
                                    key={c}
                                    className={clsx(
                                        "h-6 border-r p-0 font-normal",
                                        c === "A" ? "border-b-2 border-r-[#8a8a8a] border-b-[#217346] bg-[#626262] text-white" : "border-b border-r-[#3a3a3a] border-b-[#8a8a8a]",
                                    )}
                                >
                                    <div className="h-[22px] leading-6">{c}</div>
                                </th>
                            ))}
                        </tr>
                    </thead>
                    <tbody>
                        {rows.map((cells, i) => {
                            const rowNo = FIRST_ROW + i;
                            return (
                                <tr key={rowNo}>
                                    <th
                                        scope="row"
                                        className={clsx(
                                            "h-6 border-r border-b border-r-[#8a8a8a] border-b-[#3a3a3a] p-0 font-normal",
                                            rowNo === 487 ? "bg-[#626262] text-white" : "bg-[#0a0a0a] text-[#d4d4d4]",
                                        )}
                                    >
                                        <div className="h-[23px] leading-[25px]">{rowNo}</div>
                                    </th>
                                    {cells.map((v, c) => (
                                        <Cell key={c} col={COLUMNS[c] ?? "AD"} rowNo={rowNo} value={v} />
                                    ))}
                                </tr>
                            );
                        })}
                    </tbody>
                </table>
            </div>
            <div className="flex w-[26px] flex-col items-center pt-3.5 pb-1">
                <svg width="12" height="10" fill="#9a9a9a"><path d="M6 0l6 10H0z" /></svg>
                <div className="mt-auto h-[69px] w-2.5 rounded-full bg-[#9a9a9a]" />
                <svg width="12" height="9" className="mt-1.5" fill="#9a9a9a"><path d="M0 0h12L6 9z" /></svg>
            </div>
        </div>
    );
}

function SheetTabs() {
    return (
        <div className="flex h-10 items-center border-t border-[#4a4a4a] bg-linear-to-r from-[#121516] via-[#1f1e1c] to-[#141819] text-[17px]">
            <button aria-label="Previous sheet" className="ml-7 text-[#9a9a9a]"><ThinChevron className="rotate-90" /></button>
            <button aria-label="Next sheet" className="ml-[27px] text-[#9a9a9a]"><ThinChevron className="-rotate-90" /></button>
            <div className="ml-[54px] flex h-full items-center">
                {[AR, TA, DE, "Voids", "Checks"].map((t) => (
                    <button key={t} className="border-r border-[#5a5a5a] px-[15px] leading-6 whitespace-nowrap first:pr-4">{t}</button>
                ))}
                <button className="mx-[7px] mb-1 h-9 self-start rounded-b-md bg-white px-2 font-semibold text-[#222]">
                    <span className="block border-b-[3px] border-[#217346] leading-[26px]">Data</span>
                </button>
                <span className="h-6 w-px bg-[#5a5a5a]" />
            </div>
            <button aria-label="New sheet" className="ml-[52px]">
                <svg width="15" height="15" viewBox="0 0 15 15" stroke="currentColor" strokeWidth="1.500"><path d="M7.500 0v15M0 7.500h15" /></svg>
            </button>
            <div className="ml-auto flex w-[1021px] items-center">
                <svg width="20" height="16" viewBox="0 0 20 16" fill="#cfcfcf"><path d="M0 1h3v3H0zM0 6h3v3H0zM0 11h3v3H0z" /></svg>
                <div className="flex h-5 w-[978px] items-center rounded-full bg-[#131514] px-1.5">
                    <svg width="9" height="12" fill="#9a9a9a"><path d="M9 0v12L0 6z" /></svg>
                    <div className="ml-1.5 h-[11px] w-[382px] rounded-full bg-[#9a9a9a]" />
                    <svg width="9" height="12" className="ml-auto" fill="#9a9a9a"><path d="M0 0v12l9-6z" /></svg>
                </div>
            </div>
        </div>
    );
}

function StatusBar() {
    return (
        <div className="flex h-[33px] items-center border-t border-[#444] bg-[#141614] pl-3.5 text-[15px] text-[#e6e6e6]">
            Ready
            <button className="ml-[26px] flex items-center gap-[3px]">
                <svg width="22" height="22" viewBox="0 0 22 22" fill="none" stroke="currentColor" strokeWidth="1.500">
                    <circle cx="10" cy="3" r="2.200" />
                    <path d="M2 4c0 4 5 4 5 5l-1 11c2 2 2-2 3-5M18 4c0 4-5 4-5 5v3M12 17l3 4 7-8" />
                </svg>
                Accessibility: Good to go
            </button>
            <div className="ml-auto flex h-full items-center pr-3.5">
                <button aria-label="Normal view" className="flex h-full w-[54px] items-center justify-center bg-[#262425]">
                    <svg width="21" height="20" viewBox="0 0 21 20" fill="none" stroke="currentColor" strokeWidth="1.600"><path d="M1 1h19v18H1zM7.300 1v18M13.700 1v18M1 7h19M1 13h19" /></svg>
                </button>
                <button aria-label="Page layout view" className="flex h-full w-[54px] items-center justify-center">
                    <svg width="21" height="20" viewBox="0 0 21 20" fill="none" stroke="currentColor" strokeWidth="1.600"><path d="M1 1h19v18H1zM5.500 4h10v12h-10zM8 7h5M8 10h5M8 13h5" /></svg>
                </button>
                <button aria-label="Page break view" className="flex h-full w-[54px] items-center justify-center">
                    <svg width="21" height="20" viewBox="0 0 21 20" fill="none" stroke="currentColor" strokeWidth="1.600"><path d="M1 1h19v18H1zM7 1v11h7V1M1 12h6" /></svg>
                </button>
                <button aria-label="Zoom out" className="ml-2"><svg width="12" height="12" stroke="currentColor" strokeWidth="1.500"><path d="M0 6h12" /></svg></button>
                <input
                    type="range"
                    aria-label="Zoom"
                    defaultValue={50}
                    className="mx-1.5 h-px w-[152px] appearance-none bg-[#9a9a9a] [&::-webkit-slider-thumb]:h-[17px] [&::-webkit-slider-thumb]:w-1.5 [&::-webkit-slider-thumb]:appearance-none [&::-webkit-slider-thumb]:bg-[#b8b8b8]"
                />
                <button aria-label="Zoom in"><svg width="12" height="12" stroke="currentColor" strokeWidth="1.500"><path d="M0 6h12M6 0v12" /></svg></button>
                <span className="ml-4">100%</span>
            </div>
        </div>
    );
}

/* ---------- taskbar ---------- */

type Task = { name: string; label?: string; width: string; icon: ReactNode; state?: "open" | "active" };

const TASKS: Task[] = [
    {
        name: "Start",
        width: "w-[57px]",
        icon: (
            <svg width="30" height="30" viewBox="0 0 30 30">
                <path d="M1 1h13v13H1zM16 1h13v13H16z" fill="#6fd6fa" />
                <path d="M1 16h13v13H1zM16 16h13v13H16z" fill="#29b1f0" />
            </svg>
        ),
    },
    {
        name: "Sage",
        width: "w-[54px]",
        icon: (
            <svg width="30" height="26" viewBox="0 0 30 26">
                <path d="M8 3l19-2-4 22-22 2z" fill="#1d79c0" />
                <path d="M9 1l18-1-3 20-20 2z" fill="#eaf5fc" />
                <path d="M22 5h-8c-4 0-4 5 0 5h3c4 0 4 6 0 6H8" fill="none" stroke="#1d79c0" strokeWidth="3" />
            </svg>
        ),
    },
    {
        name: "Chrome",
        label: "Authorize.net",
        width: "w-[170px]",
        state: "open",
        icon: (
            <svg width="30" height="30" viewBox="0 0 30 30">
                <circle cx="15" cy="15" r="14.500" fill="#fbc116" />
                <path d="M15 15L2.500 7.700A14.500 14.500 0 0 1 27.600 8z" fill="#e33b2e" />
                <path d="M15 .5a14.500 14.500 0 0 1 12.600 7.500H15z" fill="#e33b2e" />
                <path d="M2.500 7.700L9 19l6 3-3.500 7.100A14.500 14.500 0 0 1 2.500 7.700z" fill="#2fa24c" />
                <circle cx="15" cy="15" r="7" fill="#fff" />
                <circle cx="15" cy="15" r="5.500" fill="#2a7ce8" />
            </svg>
        ),
    },
    {
        name: "Calculator",
        width: "w-[54px]",
        icon: (
            <svg width="24" height="30" viewBox="0 0 24 30">
                <rect width="24" height="30" rx="2" fill="#7c8084" />
                <path d="M3 3h18v5H3z" fill="#4cc2f1" />
                <path d="M3 11h5v4H3zM9.500 11h5v4h-5zM16 11h5v4h-5zM3 17h5v4H3zM9.500 17h5v4h-5zM3 23h5v4H3zM9.500 23h5v4h-5z" fill="#d8dadc" />
                <path d="M16 17h5v10h-5z" fill="#123a7a" />
            </svg>
        ),
    },
    {
        name: "Sticky Notes",
        width: "w-[54px]",
        icon: (
            <svg width="28" height="28" viewBox="0 0 28 28">
                <path d="M1 0h26v14L14 27H1z" fill="#fcd116" />
                <path d="M27 14v13H14z" fill="#3a4248" />
                <path d="M27 14H17l-3 13z" fill="#c79a3a" />
            </svg>
        ),
    },
    {
        name: "Timeslips",
        label: "Sage Timeslips",
        width: "w-[161px]",
        state: "open",
        icon: (
            <svg width="30" height="30" viewBox="0 0 30 30">
                <circle cx="16" cy="14" r="13" fill="#f0f0f0" stroke="#9a9a9a" strokeWidth="2" />
                <path d="M16 5v9l6 2" fill="none" stroke="#555" strokeWidth="1.800" />
                <rect x="0" y="12" width="14" height="18" rx="2" fill="#22a04a" />
                <text x="3" y="26" fontSize="14" fontWeight="700" fill="#fff">$</text>
            </svg>
        ),
    },
    {
        name: "Smokeball",
        width: "w-[54px]",
        icon: (
            <svg width="30" height="30" viewBox="0 0 30 30" fill="none" stroke="#e08a3c" strokeWidth="2.500">
                <path d="M13 2C-2 6-2 24 11 28" />
                <path d="M19 2c-8 0-12 6-7 10l7 6c4 4 1 9-5 10" />
                <path d="M14 4c-1 3 1 5 4 7s7 5 6 10M22 4c8 6 8 17-1 23" />
            </svg>
        ),
    },
    { name: "Outlook", label: "Inbox - HHill@", width: "w-[169px]", state: "open", icon: <OutlookIcon /> },
    {
        name: "Reminders",
        label: "1 Reminde",
        width: "w-[137px]",
        state: "open",
        icon: (
            <svg width="30" height="30" viewBox="0 0 30 30" fill="#f5b55e">
                <path d="M15 2c6 0 8 5 8 10 0 7 4 9 4 12H3c0-3 4-5 4-12C7 7 9 2 15 2z" />
                <path d="M11 25h8c0 5-8 5-8 0z" fill="#d88c2c" />
            </svg>
        ),
    },
    {
        name: "Message",
        label: "Untitled - Mes",
        width: "w-[167px]",
        state: "open",
        icon: (
            <svg width="30" height="20" viewBox="0 0 30 20">
                <path d="M1 1h28v18H1z" fill="#f4f4f4" stroke="#c0c0c0" />
                <path d="M22 3h5v6h-5z" fill="#2f8fc0" />
                <path d="M8 11h12M8 14h12" stroke="#b0b0b0" strokeWidth="1.500" />
            </svg>
        ),
    },
    { name: "Teams", label: "Chat | Full staf", width: "w-[168px]", state: "open", icon: <TeamsIcon /> },
    {
        name: "Explorer",
        label: "Home - File E",
        width: "w-[164px]",
        state: "open",
        icon: (
            <svg width="30" height="28" viewBox="0 0 30 28">
                <path d="M0 1h11l3 3v6H0z" fill="#e09a3a" />
                <path d="M0 5h30v22H0z" fill="#fbc734" />
                <path d="M5 20a2 2 0 0 1 2-2h16a2 2 0 0 1 2 2v7H5z" fill="#1b78cf" />
                <path d="M9 22h12" stroke="#0b4f96" strokeWidth="2" />
            </svg>
        ),
    },
    { name: "Excel", label: "2026 Payment", width: "w-[168px]", state: "active", icon: <ExcelIcon /> },
    { name: "Excel transactions", label: "Transaction_20", width: "w-[168px]", state: "open", icon: <ExcelIcon /> },
    {
        name: "Glitter",
        label: "Glitter Des",
        width: "w-[138px]",
        state: "open",
        icon: (
            <svg width="30" height="26" viewBox="0 0 30 26">
                <rect x="3" y="0" width="24" height="26" rx="4" fill="#1c1f7a" />
                <path d="M6 3h2M22 3h2M11 23h2M24 20h1M5 16h1M17 2h2" stroke="#9a8cff" strokeWidth="1.500" />
                <text x="9" y="19" fontSize="17" fontWeight="700" fill="#fff">G</text>
            </svg>
        ),
    },
];

const TRAY: { name: string; icon: ReactNode }[] = [
    { name: "Show hidden icons", icon: <svg width="16" height="10" viewBox="0 0 16 10" fill="none" stroke="#f0f0f0" strokeWidth="1.800"><path d="M1 9l7-7 7 7" /></svg> },
    { name: "Mail", icon: <svg width="18" height="14" viewBox="0 0 18 14"><path d="M0 0h18v14H0z" fill="#f2b774" /><path d="M1 1l8 8 8-8" fill="none" stroke="#3a2a1c" strokeWidth="1.500" /></svg> },
    { name: "Outlook", icon: <OutlookIcon size={18} /> },
    { name: "OneDrive", icon: <svg width="20" height="15" viewBox="0 0 20 15"><path d="M5 14a5 5 0 0 1-1-9 6 6 0 0 1 11-1 5 5 0 0 1 0 10z" fill="#2f9bef" /><path d="M4 14l11-7a4 4 0 0 1 0 7z" fill="#5cc0fa" /></svg> },
    { name: "Drive", icon: <svg width="20" height="18" viewBox="0 0 20 18" fill="none"><path d="M10 1c3 0 8 10 8 13s-2 3-3 3H5c-1 0-3 0-3-3S7 1 10 1z" fill="#f0932b" /><path d="M10 5c2 1 3 5 3 7s-1 2-3 2-3 0-3-2 1-6 3-7z" fill="#1d2c2e" stroke="#ffe0a8" strokeWidth="1.500" /></svg> },
    { name: "Sage", icon: <svg width="18" height="16" viewBox="0 0 18 16"><path d="M4 1l14-1-3 15-15 1z" fill="#d8d8d8" /><path d="M13 4H8C5 4 5 8 8 8h2c3 0 3 4 0 4H4" fill="none" stroke="#555" strokeWidth="2" /></svg> },
    { name: "Teams", icon: <svg width="22" height="20" viewBox="0 0 22 20"><circle cx="9" cy="3" r="3" fill="#8f8cff" /><circle cx="16" cy="4" r="2.500" fill="#7b6ff0" /><rect x="2" y="7" width="13" height="12" rx="3" fill="#5b5fd0" /><circle cx="15.500" cy="14" r="5.500" fill="#107c10" /><path d="M13 14l2 2 3-4" fill="none" stroke="#fff" strokeWidth="1.500" /></svg> },
    { name: "ESET", icon: <svg width="20" height="18" viewBox="0 0 20 18"><rect x="1" y="1" width="18" height="16" rx="7" fill="#e8f6f8" stroke="#2197a8" strokeWidth="2" /><path d="M6.500 9h7c0-5-7-5-7 0 0 4.500 5 4.500 6.500 2.500" fill="none" stroke="#1b8090" strokeWidth="2" /></svg> },
    { name: "Package", icon: <svg width="20" height="20" viewBox="0 0 20 20" fill="none"><rect width="20" height="20" rx="2" fill="#1a7fe0" /><path d="M10 4l5 3v6l-5 3-5-3V7zM5 7l5 3 5-3M10 10v6" stroke="#cfe6ff" strokeWidth="1.500" /></svg> },
    { name: "Security", icon: <svg width="20" height="20" viewBox="0 0 20 20"><path d="M9 0l8 3v6c0 5-4 8-8 10-4-2-8-5-8-10V3z" fill="#3fb4ef" /><circle cx="14.500" cy="14" r="5.500" fill="#107c10" /><path d="M12 14l2 2 3-4" fill="none" stroke="#fff" strokeWidth="1.500" /></svg> },
    { name: "Microphone", icon: <svg width="16" height="20" viewBox="0 0 16 20" fill="none" stroke="#8fc4cf" strokeWidth="1.400"><rect x="5" y="1" width="6" height="11" rx="3" /><path d="M2 9c0 8 12 8 12 0M8 15v4" /></svg> },
    { name: "Network", icon: <svg width="20" height="20" viewBox="0 0 20 20" fill="none" stroke="#f0f0f0" strokeWidth="1.400"><path d="M11 2H1v13h16v-5M4 19h9M9 15v4M14 1h5v6h-5zM16.500 7v8" /></svg> },
];

function Taskbar() {
    return (
        <footer className="flex h-[60px] items-center border-t border-[#4a4f50] bg-linear-to-r from-[#18292c] via-[#25272a] to-[#17292c] pl-4 text-[16px]">
            <ul className="flex">
                {TASKS.map((t) => (
                    <li key={t.name} className={clsx("pr-1", t.width)}>
                        <button
                            aria-label={t.name}
                            className={clsx(
                                "relative flex h-[50px] w-full items-center gap-2.5 pl-2.5",
                                t.state === "active" && "rounded-md border border-[#3f4347] bg-[#2f3338] pl-[9px]",
                            )}
                        >
                            <span className="flex w-[30px] shrink-0 justify-center">{t.icon}</span>
                            {t.label && <span className="mr-1 overflow-hidden whitespace-nowrap">{t.label}</span>}
                            {t.state && (
                                <span
                                    className={clsx(
                                        "absolute bottom-px h-1 rounded-full",
                                        t.state === "active" ? "left-[15px] w-5 bg-[#6cb8e0]" : "left-[21px] w-2 bg-[#9a9a9a]",
                                    )}
                                />
                            )}
                        </button>
                    </li>
                ))}
            </ul>
            <div className="ml-auto flex items-center pr-3.5">
                {TRAY.map((t) => (
                    <button key={t.name} aria-label={t.name} className="flex w-10 justify-center">{t.icon}</button>
                ))}
                <button aria-label="Volume" className="w-5">
                    <svg width="20" height="16" viewBox="0 0 20 16" fill="none" stroke="#f0f0f0" strokeWidth="1.400"><path d="M1 5h3l5-4v14l-5-4H1zM12 5c2 2 2 4 0 6M14 3c3 3 3 7 0 10" /></svg>
                </button>
                <button className="w-[90px] text-right text-[15px] leading-5 whitespace-nowrap">
                    9:43 AM
                    <br />
                    4/20/2026
                </button>
                <button aria-label="Notifications" className="flex w-10 justify-center">
                    <svg width="18" height="20" viewBox="0 0 18 20" fill="none" stroke="#f0f0f0" strokeWidth="1.400">
                        <path d="M8 3C4 3 3 6 3 9v4l-2 3h15l-2-3M6 16c0 4 5 4 5 0M12 1h5l-5 6h5M7 8h4l-4 5h4" />
                    </svg>
                </button>
            </div>
        </footer>
    );
}

export default function App() {
    return (
        <div className="flex h-screen flex-col overflow-hidden bg-linear-to-r from-[#1e2326] via-[#252324] to-[#1e2326] font-['Open_Sans','Noto_Sans',sans-serif] text-[#f2f2f2]">
            <TitleBar />
            <MenuTabs />
            <Ribbon />
            <FormulaBar />
            <Sheet />
            <SheetTabs />
            <StatusBar />
            <Taskbar />
        </div>
    );
}
